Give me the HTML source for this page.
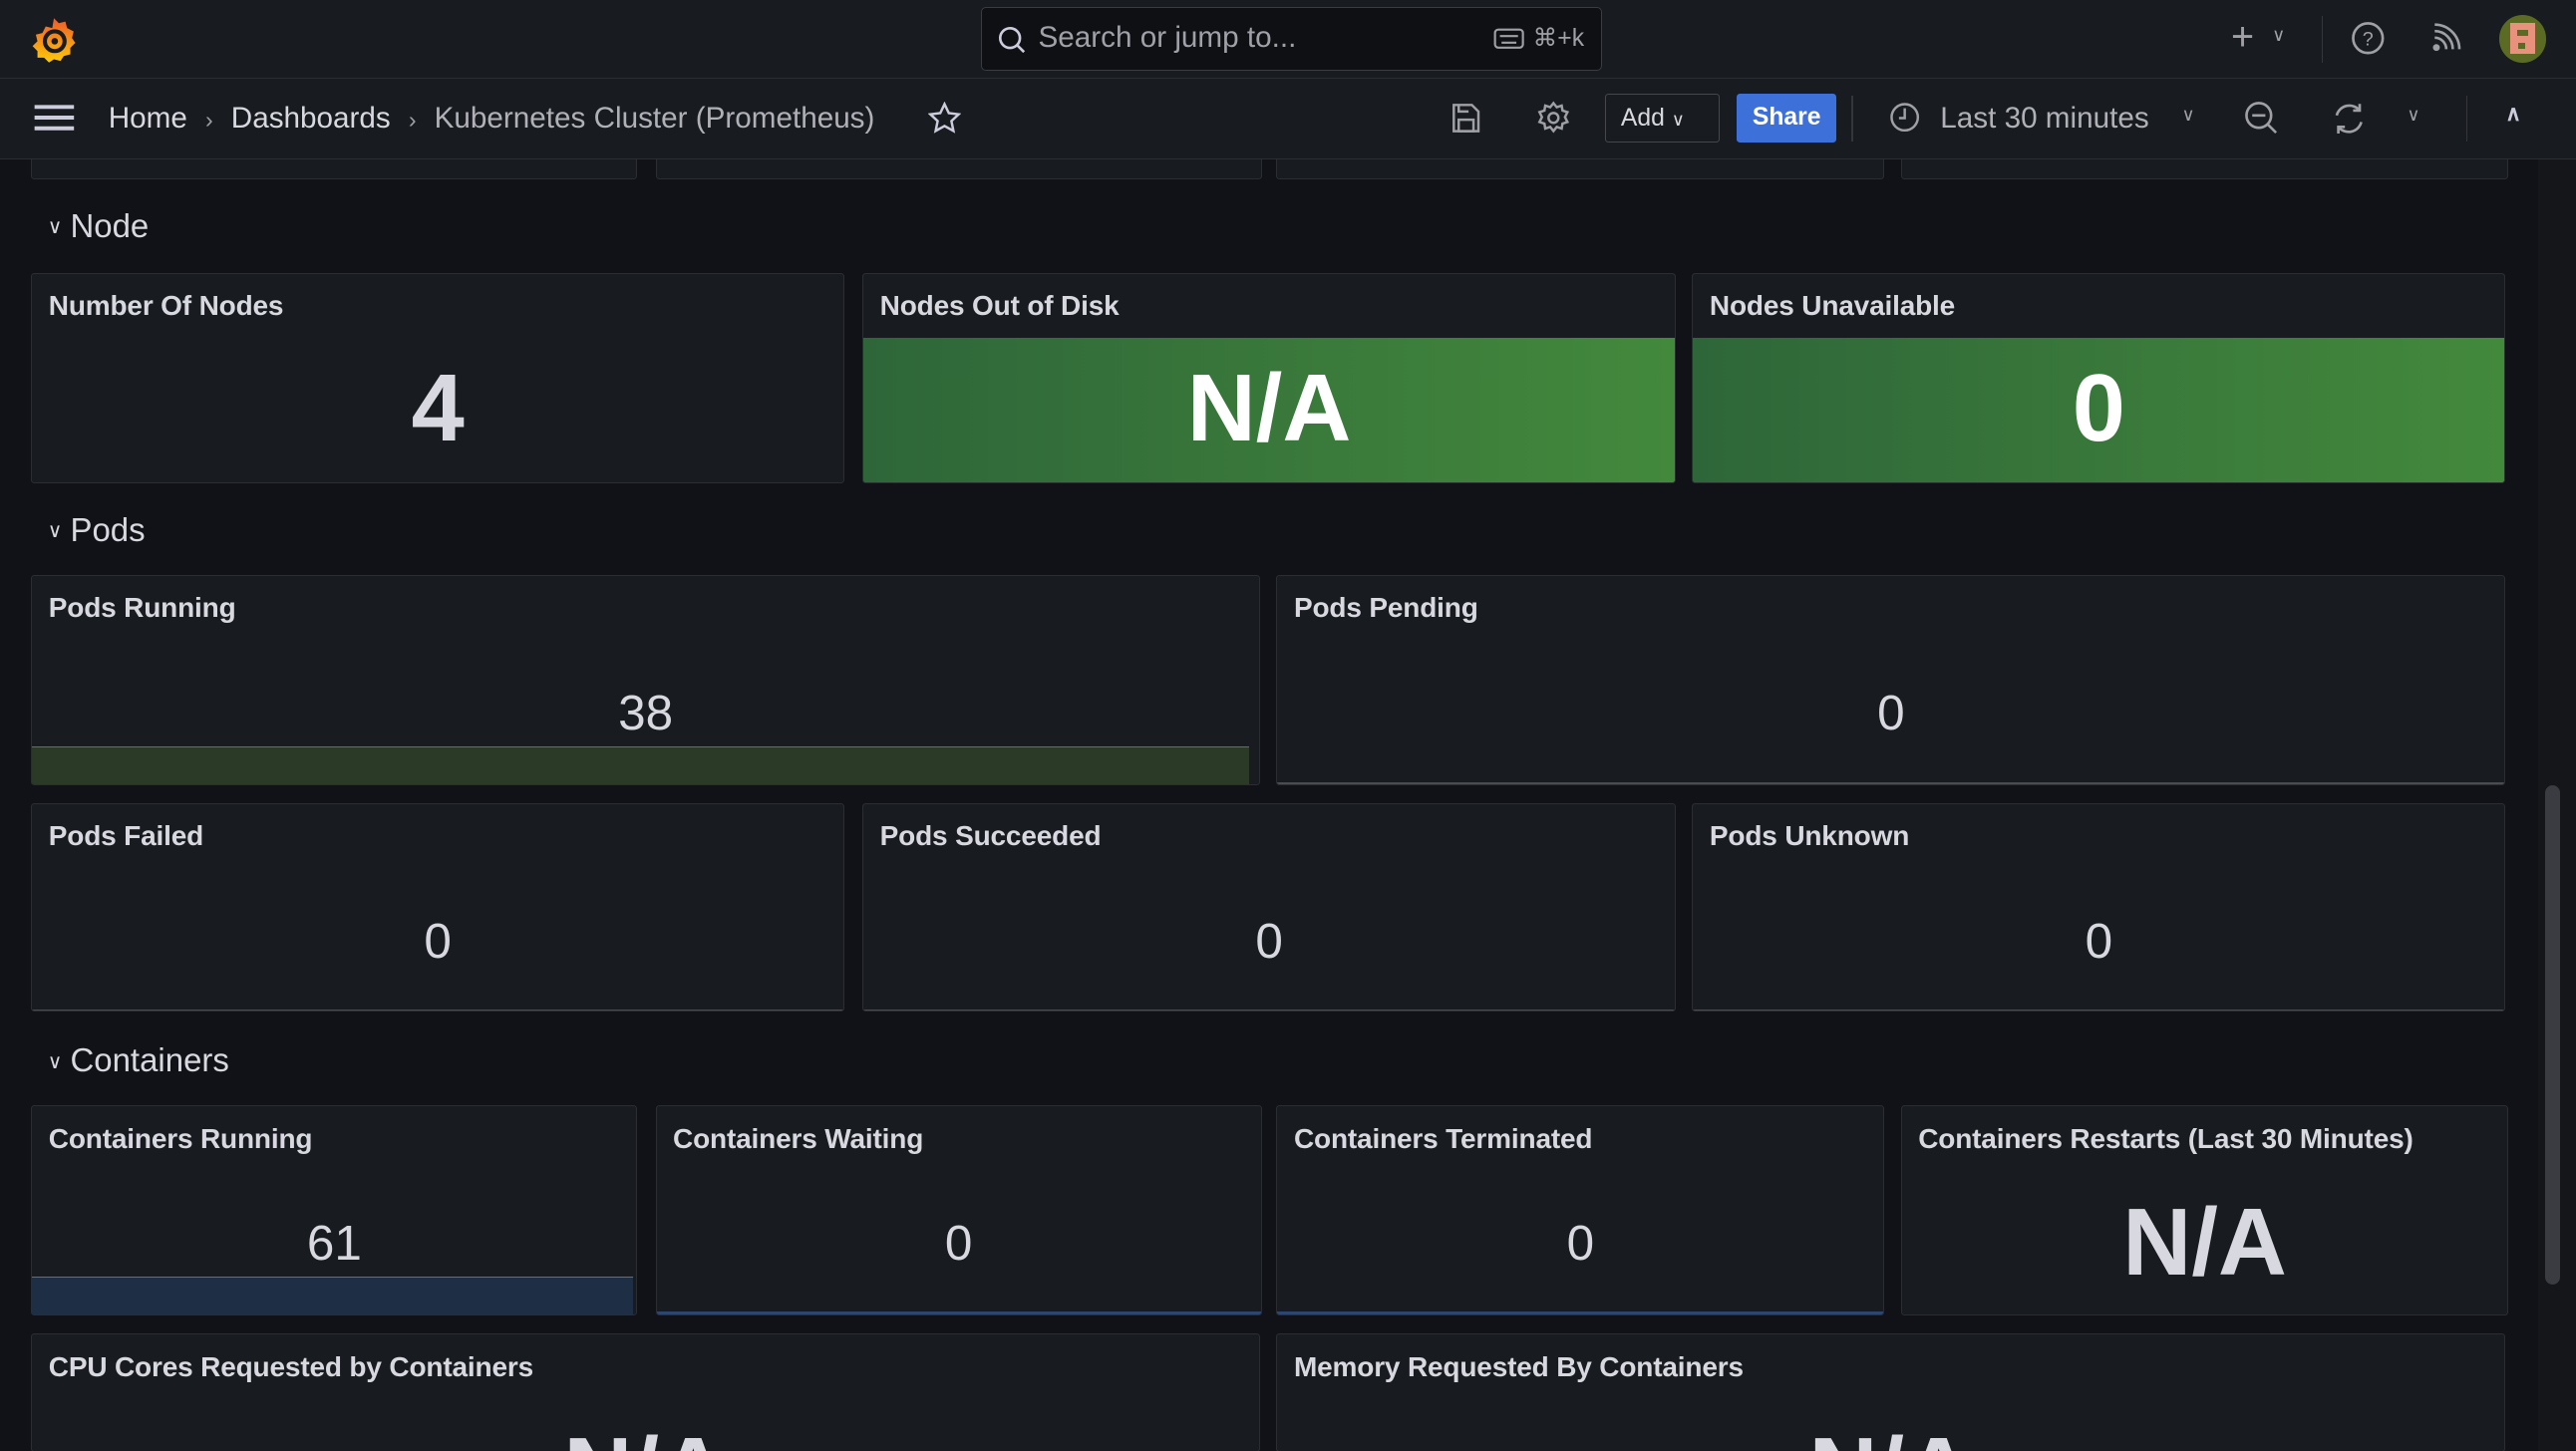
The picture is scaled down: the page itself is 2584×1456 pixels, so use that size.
<!DOCTYPE html>
<html><head><meta charset="utf-8"><style>
*{box-sizing:border-box;margin:0;padding:0}
html,body{width:2584px;height:1456px;overflow:hidden;background:#111217}
#w{zoom:1.648;width:1568px;height:884px;position:relative;font-family:"Liberation Sans",sans-serif;color:#ccccdc;overflow:hidden}
.abs{position:absolute}
.top{left:0;top:0;width:1568px;height:48px;background:#181b1f;border-bottom:1px solid #2c2e33;z-index:2}
.bar{left:0;top:48px;width:1568px;height:49px;background:#181b1f;border-bottom:1px solid #2c2e33;z-index:2}
.z{z-index:3}
.search{left:597px;top:4px;width:378px;height:39px;background:#0f1014;border:1px solid #3a3c42;border-radius:3px}
.p{position:absolute;background:#181b1f;border:1px solid #2b2d33;border-radius:2px;overflow:hidden}
.p .t{position:absolute;left:10px;top:10px;font-size:17px;font-weight:bold;color:#d8d9e0;letter-spacing:-0.1px}
.p .v{position:absolute;left:0;right:0;text-align:center;color:#d8d9e0}
.big{font-weight:bold}
.row{position:absolute;left:29px;font-size:20px;color:#d8d9e0}
.row span{font-size:12px;margin-right:5px;position:relative;top:-2px}
.g{background:linear-gradient(90deg,#2e6639,#43893c);border-color:#2b2d33}
.ico{position:absolute;z-index:3}
</style></head><body><div id="w">
<div class="abs top"></div>
<svg class="ico" style="left:19px;top:9px" width="29" height="30" viewBox="0 0 29 30"><defs><linearGradient id="gr" x1="0" y1="0" x2="0" y2="1"><stop offset="0" stop-color="#f05a28"/><stop offset="1" stop-color="#fbca0a"/></linearGradient></defs><path d="M14 2l3 3 4-1 1 4 4 2-1 4 2 3-3 3 0 4-4 1-2 3-4-1-3 2-3-3-4 0 0-4-3-3 3-3-1-4 4-1 2-4 4 1z" fill="url(#gr)"/><circle cx="14.5" cy="16" r="6" fill="none" stroke="#181b1f" stroke-width="2.5"/><circle cx="14.5" cy="16" r="2" fill="#181b1f"/></svg>
<div class="abs search z"></div>
<svg class="ico" style="left:607px;top:15px" width="18" height="18" viewBox="0 0 18 18" fill="none" stroke="#ccccdc" stroke-width="1.6"><circle cx="8" cy="8" r="6"/><path d="M12.5 12.5l4 4"/></svg>
<div class="abs z" style="left:632px;top:13px;font-size:18px;color:#a0a1a8">Search or jump to...</div>
<svg class="ico" style="left:909px;top:17px" width="19" height="13" viewBox="0 0 19 13" fill="none" stroke="#9fa0a6" stroke-width="1.3"><rect x="1" y="1" width="17" height="11" rx="2"/><path d="M4 5h11M5 9h9"/></svg>
<div class="abs z" style="left:933px;top:14px;font-size:15px;color:#9fa0a6">⌘+k</div>
<div class="abs z" style="left:1358px;top:9px;font-size:24px;color:#9fa0a6;font-weight:300">+</div>
<div class="abs z" style="left:1383px;top:15px;font-size:11px;color:#9fa0a6">∨</div>
<div class="abs z" style="left:1413px;top:10px;width:1px;height:28px;background:#34363c"></div>
<svg class="ico" style="left:1431px;top:13px" width="21" height="21" viewBox="0 0 21 21" fill="none" stroke="#9fa0a6" stroke-width="1.6"><circle cx="10.5" cy="10.5" r="9"/><text x="10.5" y="15" font-size="12" text-anchor="middle" fill="#9fa0a6" stroke="none" font-family="Liberation Sans">?</text></svg>
<svg class="ico" style="left:1480px;top:14px" width="18" height="18" viewBox="0 0 18 18" fill="none" stroke="#9fa0a6" stroke-width="1.6"><circle cx="3" cy="15" r="1.3" fill="#9fa0a6"/><path d="M2 9a7 7 0 017 7M2 5a11 11 0 0111 11M2 1a15 15 0 0115 15"/></svg>
<div class="abs z" style="left:1521px;top:9px;width:29px;height:29px;border-radius:50%;background:#5b6b24;overflow:hidden"><div style="position:absolute;left:7px;top:5px;width:15px;height:19px;background:#e8917d"></div><div style="position:absolute;left:11px;top:9px;width:7px;height:4px;background:#5b6b24"></div><div style="position:absolute;left:12px;top:17px;width:4px;height:4px;background:#5b6b24"></div></div>
<div class="abs bar"></div>
<svg class="ico" style="left:20px;top:63px" width="26" height="17" viewBox="0 0 26 17" stroke="#ccccdc" stroke-width="2.4"><path d="M1 2h24M1 8.5h24M1 15h24"/></svg>
<div class="abs z" style="left:66px;top:62px;font-size:18px;color:#d8d9e0;white-space:nowrap">Home <span style="color:#9fa0a6;margin:0 6px;font-size:14px">›</span> Dashboards <span style="color:#9fa0a6;margin:0 6px;font-size:14px">›</span> <span style="color:#b0b1b8">Kubernetes Cluster (Prometheus)</span></div>
<svg class="ico" style="left:565px;top:62px" width="20" height="20" viewBox="0 0 20 20" fill="none" stroke="#ccccdc" stroke-width="1.5"><path d="M10 1.5l2.6 5.5 6 .7-4.4 4.1 1.2 6-5.4-3-5.4 3 1.2-6L1.4 7.7l6-.7z"/></svg>
<svg class="ico" style="left:883px;top:62px" width="19" height="20" viewBox="0 0 19 20" fill="none" stroke="#9fa0a6" stroke-width="1.5"><path d="M2 2h11l4 4v12H2z"/><rect x="5" y="11" width="9" height="7"/><path d="M5 2v4h6"/></svg>
<svg class="ico" style="left:935px;top:61px" width="21" height="21" viewBox="0 0 21 21" fill="none" stroke="#9fa0a6" stroke-width="1.5"><circle cx="10.5" cy="10.5" r="3"/><path d="M10.5 1.5l2 2.5 3-1 .5 3 3 1-1.5 3 1.5 3-3 1-.5 3-3-1-2 2.5-2-2.5-3 1-.5-3-3-1 1.5-3-1.5-3 3-1 .5-3 3 1z"/></svg>
<div class="abs z" style="left:977px;top:57px;width:70px;height:30px;border:1px solid #45474d;border-radius:2px;font-size:15px;color:#d8d9e0;padding:6px 0 0 9px">Add <span style="font-size:11px">∨</span></div>
<div class="abs z" style="left:1057px;top:57px;width:61px;height:30px;background:#3d71d9;border-radius:2px;font-size:15px;color:#fff;font-weight:bold;text-align:center;padding-top:6px">Share</div>
<div class="abs z" style="left:1127px;top:58px;width:1px;height:28px;background:#34363c"></div>
<svg class="ico" style="left:1150px;top:62px" width="19" height="19" viewBox="0 0 19 19" fill="none" stroke="#9fa0a6" stroke-width="1.5"><circle cx="9.5" cy="9.5" r="8"/><path d="M9.5 4v6H6"/></svg>
<div class="abs z" style="left:1181px;top:62px;font-size:18px;color:#b0b1b8">Last 30 minutes</div>
<div class="abs z" style="left:1328px;top:64px;font-size:11px;color:#9fa0a6">∨</div>
<svg class="ico" style="left:1366px;top:61px" width="21" height="21" viewBox="0 0 21 21" fill="none" stroke="#9fa0a6" stroke-width="1.6"><circle cx="9" cy="9" r="7.5"/><path d="M5 9h8M14.5 14.5l5 5"/></svg>
<svg class="ico" style="left:1419px;top:61px" width="21" height="22" viewBox="0 0 21 22" fill="none" stroke="#9fa0a6" stroke-width="1.6"><path d="M17 6A8 8 0 003 9M4 16a8 8 0 0014-3M17 2v4h-4M4 20v-4h4"/></svg>
<div class="abs z" style="left:1465px;top:64px;font-size:11px;color:#9fa0a6">∨</div>
<div class="abs z" style="left:1501px;top:58px;width:1px;height:28px;background:#34363c"></div>
<div class="abs z" style="left:1525px;top:62px;font-size:13px;color:#ccccdc;font-weight:bold">∧</div>

<div class="p" style="left:19px;top:84px;width:369px;height:25px"></div>
<div class="p" style="left:399px;top:84px;width:369px;height:25px"></div>
<div class="p" style="left:777px;top:84px;width:370px;height:25px"></div>
<div class="p" style="left:1157px;top:84px;width:370px;height:25px"></div>

<div class="row" style="top:126px"><span>∨</span>Node</div>
<div class="p" style="left:19px;top:166px;width:495px;height:128px"><div class="t">Number Of Nodes</div><div class="v big" style="top:49px;font-size:58px">4</div></div>
<div class="p g" style="left:525px;top:166px;width:495px;height:128px"><div style="position:absolute;left:0;top:0;right:0;height:39px;background:#181b1f"></div><div class="t">Nodes Out of Disk</div><div class="v big" style="top:49px;font-size:58px;color:#fff">N/A</div></div>
<div class="p g" style="left:1030px;top:166px;width:495px;height:128px"><div style="position:absolute;left:0;top:0;right:0;height:39px;background:#181b1f"></div><div class="t">Nodes Unavailable</div><div class="v big" style="top:49px;font-size:58px;color:#fff">0</div></div>

<div class="row" style="top:311px"><span>∨</span>Pods</div>
<div class="p" style="left:19px;top:350px;width:748px;height:128px"><div class="t">Pods Running</div><div class="v" style="top:66px;font-size:30px">38</div><div style="position:absolute;left:0;width:741px;top:104px;height:24px;background:#2a3a27;border-top:1px solid #5d7a3d"></div></div>
<div class="p" style="left:777px;top:350px;width:748px;height:128px"><div class="t">Pods Pending</div><div class="v" style="top:66px;font-size:30px">0</div><div style="position:absolute;left:0;right:0;bottom:0;height:1px;background:#4a4c52"></div></div>
<div class="p" style="left:19px;top:489px;width:495px;height:127px"><div class="t">Pods Failed</div><div class="v" style="top:66px;font-size:30px">0</div><div style="position:absolute;left:0;right:0;bottom:0;height:1px;background:#4a4c52"></div></div>
<div class="p" style="left:525px;top:489px;width:495px;height:127px"><div class="t">Pods Succeeded</div><div class="v" style="top:66px;font-size:30px">0</div><div style="position:absolute;left:0;right:0;bottom:0;height:1px;background:#4a4c52"></div></div>
<div class="p" style="left:1030px;top:489px;width:495px;height:127px"><div class="t">Pods Unknown</div><div class="v" style="top:66px;font-size:30px">0</div><div style="position:absolute;left:0;right:0;bottom:0;height:1px;background:#4a4c52"></div></div>

<div class="row" style="top:634px"><span>∨</span>Containers</div>
<div class="p" style="left:19px;top:673px;width:369px;height:128px"><div class="t">Containers Running</div><div class="v" style="top:66px;font-size:30px">61</div><div style="position:absolute;left:0;width:366px;top:104px;height:24px;background:#1e2f45;border-top:1px solid #3274d9"></div></div>
<div class="p" style="left:399px;top:673px;width:369px;height:128px"><div class="t">Containers Waiting</div><div class="v" style="top:66px;font-size:30px">0</div><div style="position:absolute;left:0;right:0;bottom:0;height:2px;background:#2c4670"></div></div>
<div class="p" style="left:777px;top:673px;width:370px;height:128px"><div class="t">Containers Terminated</div><div class="v" style="top:66px;font-size:30px">0</div><div style="position:absolute;left:0;right:0;bottom:0;height:2px;background:#2c4670"></div></div>
<div class="p" style="left:1157px;top:673px;width:370px;height:128px"><div class="t">Containers Restarts (Last 30 Minutes)</div><div class="v big" style="top:50px;font-size:58px">N/A</div></div>
<div class="p" style="left:19px;top:812px;width:748px;height:72px"><div class="t">CPU Cores Requested by Containers</div><div class="v big" style="top:50px;font-size:58px">N/A</div></div>
<div class="p" style="left:777px;top:812px;width:748px;height:72px"><div class="t">Memory Requested By Containers</div><div class="v big" style="top:50px;font-size:58px">N/A</div></div>

<div class="abs" style="left:1545px;top:97px;width:23px;height:787px;background:#15161a"></div>
<div class="abs" style="left:1549px;top:478px;width:9px;height:304px;background:#3a3c42;border-radius:5px"></div>
</div></body></html>
